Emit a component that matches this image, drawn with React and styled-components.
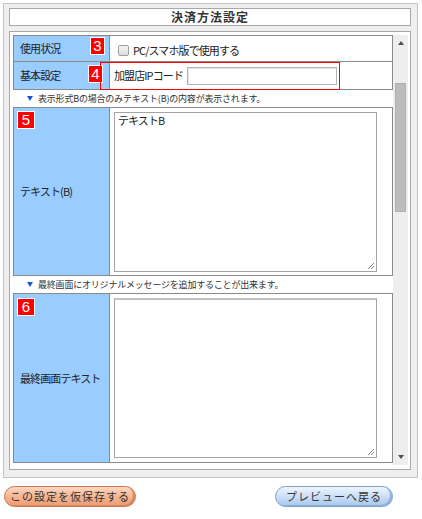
import React from 'react';
import styled, { createGlobalStyle } from 'styled-components';

const GlobalStyle = createGlobalStyle`
* { box-sizing: border-box; }
body {
    margin: 0;
    background: #fff;
    font-family: "Noto Sans CJK JP", "Liberation Sans", sans-serif;
    color: #222;
}
`;

const Page = styled.div`
width: 422px;
padding-top: 3px;
`;

const Panel = styled.div`
margin-left: 3px;
width: 415px;
height: 475px;
border: 1px solid #c4c4c4;
background: #efefef;
padding: 4px 6px 7px 5px;
`;

const Title = styled.div`
height: 18px;
border: 1px solid #a8a8a8;
background: #fff;
display: flex;
align-items: center;
justify-content: center;
font-size: 12px;
font-weight: bold;
letter-spacing: 1px;
line-height: 1;
color: #333;
`;

const ScrollBox = styled.div`
margin-top: 5px;
height: 439px;
border: 1px solid #a8a8a8;
background: #fff;
display: flex;
padding: 3px 2px 0 3px;
overflow: hidden;
`;

const Content = styled.div`
width: 380px;
flex: none;
`;

const Table = styled.div`
position: relative;
border-top: 1px solid #8a8a8a;
`;

const Row = styled.div`
display: grid;
grid-template-columns: 96px 1fr;
height: ${p => p.h}px;
border-left: 1px solid #8a8a8a;
border-right: 1px solid #8a8a8a;
border-bottom: 1px solid #8a8a8a;
`;

const Label = styled.div`
position: relative;
background: #99ccff;
border-right: 1px solid #8a8a8a;
display: flex;
align-items: center;
padding-left: 6px;
font-size: 11px;
line-height: 1;
letter-spacing: -0.9px;
color: #222;
`;

const Value = styled.div`
display: flex;
align-items: ${p => p.top ? 'flex-start' : 'center'};
padding: ${p => p.top ? '4px 0 0 4px' : '0 0 0 4px'};
font-size: 11px;
line-height: 1;
letter-spacing: -0.9px;
color: #222;
`;

const Badge = styled.div`
position: absolute;
left: ${p => p.x}px;
top: ${p => p.y}px;
width: ${p => p.w}px;
height: 18px;
background: #ff0000;
border: 1px solid #fff;
color: #fff;
font-family: "Liberation Sans", sans-serif;
font-size: 15px;
letter-spacing: 0;
line-height: 16px;
text-align: center;
`;

const Highlight = styled.div`
position: absolute;
left: 87px;
top: 26px;
width: 240px;
height: 28px;
border: 1px solid #ff0000;
pointer-events: none;
`;

const Check = styled.span`
width: 11px;
height: 11px;
margin: 4px 4px 0 4px;
border: 1px solid #a0a0a0;
border-radius: 2px;
background: linear-gradient(#f4f4f4, #dcdcdc);
`;

const CheckText = styled.span`
padding-top: 4px;
`;

const TextInput = styled.div`
width: 150px;
height: 18px;
margin-left: 4px;
border: 1px solid #b4b4b4;
box-shadow: inset 1px 1px 0 #e4e4e4;
background: #fff;
`;

const Note = styled.div`
height: 17px;
display: flex;
align-items: center;
padding-left: 14px;
font-size: 9px;
line-height: 1;
letter-spacing: -0.2px;
color: #333;
`;

const NoteMark = styled.span`
width: 0;
height: 0;
border-left: 3px solid transparent;
border-right: 3px solid transparent;
border-top: 5px solid #1a55d6;
margin-right: 5px;
`;

const TextArea = styled.div`
position: relative;
width: 263px;
height: 160px;
border: 1px solid #a4a4a4;
border-top-color: ${p => p.dark ? '#c0c0c0' : '#a4a4a4'};
border-top-width: ${p => p.dark ? '2px' : '1px'};
padding: 2px 3px;
font-size: 11px;
line-height: 1;
`;

const Grip = styled.svg`
position: absolute;
right: 1px;
bottom: 1px;
`;

const Track = styled.div`
width: 15px;
height: 430px;
flex: none;
background: #eeeeee;
display: flex;
flex-direction: column;
align-items: center;
`;

const ArrowBox = styled.div`
height: 16px;
display: flex;
align-items: center;
justify-content: center;
margin-top: ${p => p.bottom ? 'auto' : '0'};
`;

const Arrow = styled.span`
width: 0;
height: 0;
border-left: 3.5px solid transparent;
border-right: 3.5px solid transparent;
${p => p.down ? 'border-top: 4px solid #505050;' : 'border-bottom: 4px solid #505050;'}
`;

const Thumb = styled.div`
width: 11px;
height: 129px;
margin-top: 32px;
background: #bcbcbc;
border: 1px solid #b0b0b0;
`;

const ButtonRow = styled.div`
display: flex;
justify-content: space-between;
margin-top: 8px;
padding: 0 29px 0 4px;
`;

const Button = styled.div`
width: ${p => p.w}px;
height: 21px;
border-radius: 11px;
display: flex;
align-items: center;
justify-content: center;
font-size: 11px;
line-height: 1;
letter-spacing: 1px;
color: #333;
border: 1px solid ${p => p.orange ? '#c8774c' : '#7b9fd0'};
background: ${p => p.orange
    ? 'linear-gradient(#fbd8c4 0%, #f6b896 45%, #ec9a72 100%)'
    : 'linear-gradient(#eef5fe 0%, #cfe1f7 45%, #a8c6ec 100%)'};
box-shadow: ${p => p.orange ? 'inset -2px -1px 0 #d88660' : 'inset -2px -1px 0 #8eb0de'};
`;

const ResizeGrip = () => (
    <Grip width="8" height="8" viewBox="0 0 8 8">
        <path d="M7 1L1 7M7 4L4 7" stroke="#888" strokeWidth="1" />
    </Grip>
);

export default function App() {
    return (
        <Page>
            <GlobalStyle />
            <Panel>
                <Title>決済方法設定</Title>
                <ScrollBox>
                    <Content>
                        <Table>
                            <Row h={26}>
                                <Label>
                                    使用状況
                                    <Badge x={76} y={1} w={15}>3</Badge>
                                </Label>
                                <Value>
                                    <Check />
                                    <CheckText>PC/スマホ版で使用する</CheckText>
                                </Value>
                            </Row>
                            <Row h={28}>
                                <Label>
                                    基本設定
                                    <Badge x={74} y={3} w={15}>4</Badge>
                                </Label>
                                <Value>
                                    加盟店IPコード
                                    <TextInput />
                                </Value>
                            </Row>
                            <Highlight />
                        </Table>
                        <Note><NoteMark />表示形式Bの場合のみテキスト(B)の内容が表示されます。</Note>
                        <Table>
                            <Row h={168}>
                                <Label>
                                    テキスト(B)
                                    <Badge x={3} y={3} w={18}>5</Badge>
                                </Label>
                                <Value top>
                                    <TextArea>テキストB<ResizeGrip /></TextArea>
                                </Value>
                            </Row>
                        </Table>
                        <Note><NoteMark />最終画面にオリジナルメッセージを追加することが出来ます。</Note>
                        <Table>
                            <Row h={169}>
                                <Label>
                                    最終画面テキスト
                                    <Badge x={3} y={4} w={18}>6</Badge>
                                </Label>
                                <Value top>
                                    <TextArea dark><ResizeGrip /></TextArea>
                                </Value>
                            </Row>
                        </Table>
                    </Content>
                    <Track>
                        <ArrowBox><Arrow /></ArrowBox>
                        <Thumb />
                        <ArrowBox bottom><Arrow down /></ArrowBox>
                    </Track>
                </ScrollBox>
            </Panel>
            <ButtonRow>
                <Button orange w={132}>この設定を仮保存する</Button>
                <Button w={118}>プレビューへ戻る</Button>
            </ButtonRow>
        </Page>
    );
}
